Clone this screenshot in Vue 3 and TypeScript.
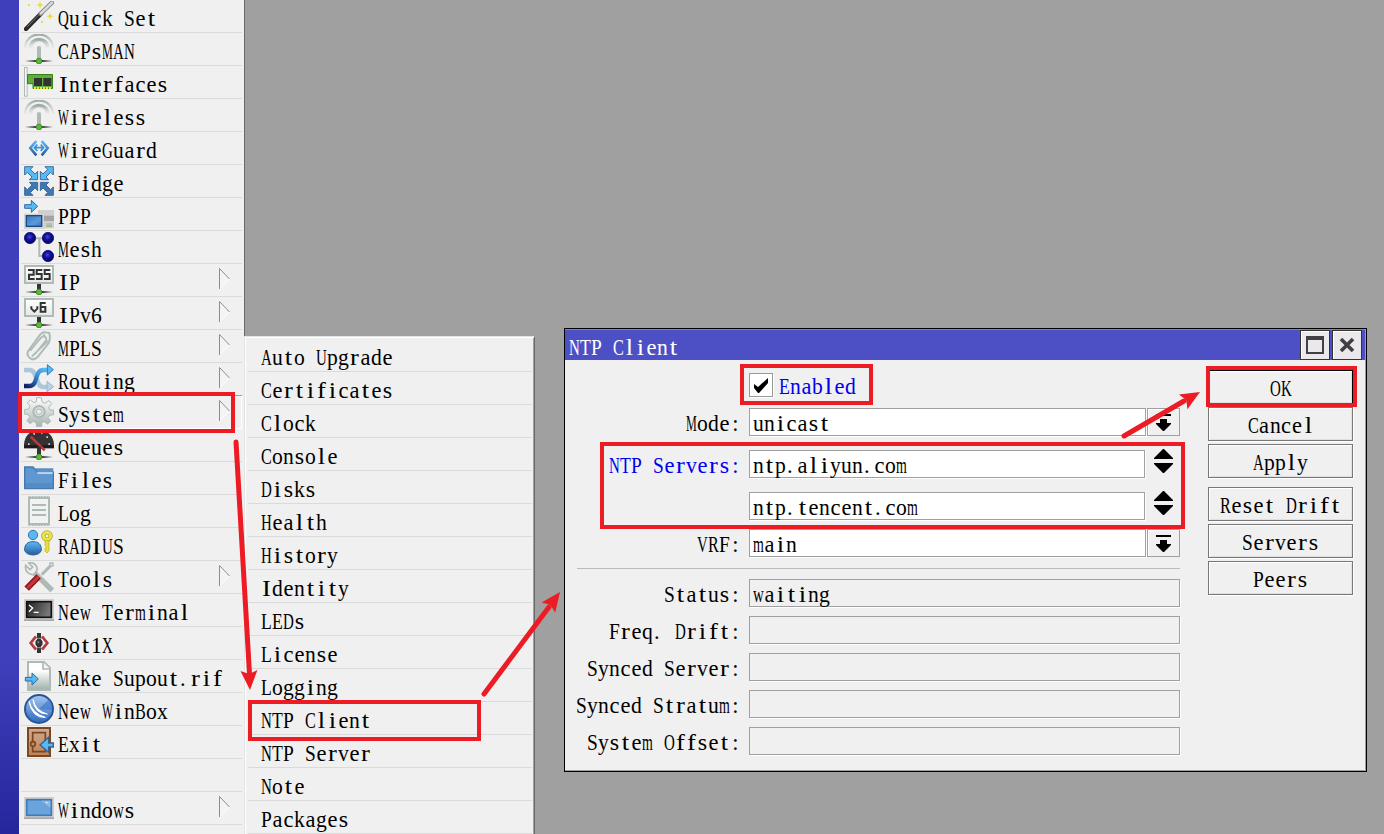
<script setup lang="ts">
import { h, type FunctionalComponent } from 'vue'

interface MenuRow {
  label: string
  icon?: string
  sub?: boolean
  active?: boolean
}

const CELL = 11
const ruler = document.createElement('canvas').getContext('2d')!
ruler.font = '22.5px "Liberation Serif"'

// Sets each glyph into a fixed-pitch cell, condensing wide glyphs and widening narrow ones.
function cellStyle(ch: string) {
  const natural = ruler.measureText(ch).width
  if (natural > 10.4) {
    return { transform: `scaleX(${(10.8 / natural).toFixed(4)})`, transformOrigin: '0 50%' }
  }
  if (ch === '.') return { textIndent: '1px' }
  const indent = ((CELL - natural) / 2).toFixed(2) + 'px'
  if (natural < 9 && ch !== ':') {
    return { textIndent: indent, transform: `scaleX(${Math.min(1.18, 9.4 / natural).toFixed(4)})` }
  }
  return { textIndent: indent }
}

const Cells: FunctionalComponent<{ text: string }> = (props) =>
  h('span', { class: 'cells' }, [...props.text].map((ch) =>
    ch === ' ' ? ' ' : h('span', { class: 'cell', style: cellStyle(ch) }, ch)))
Cells.props = ['text']

const menu: MenuRow[] = [
  { label: 'Quick Set', icon: 'wand' },
  { label: 'CAPsMAN', icon: 'antenna' },
  { label: 'Interfaces', icon: 'card' },
  { label: 'Wireless', icon: 'antenna' },
  { label: 'WireGuard', icon: 'wireguard' },
  { label: 'Bridge', icon: 'bridge' },
  { label: 'PPP', icon: 'ppp' },
  { label: 'Mesh', icon: 'mesh' },
  { label: 'IP', icon: 'ip', sub: true },
  { label: 'IPv6', icon: 'ipv6', sub: true },
  { label: 'MPLS', icon: 'mpls', sub: true },
  { label: 'Routing', icon: 'routing', sub: true },
  { label: 'System', icon: 'gear', sub: true, active: true },
  { label: 'Queues', icon: 'queues' },
  { label: 'Files', icon: 'files' },
  { label: 'Log', icon: 'log' },
  { label: 'RADIUS', icon: 'radius' },
  { label: 'Tools', icon: 'tools', sub: true },
  { label: 'New Terminal', icon: 'terminal' },
  { label: 'Dot1X', icon: 'dot1x' },
  { label: 'Make Supout.rif', icon: 'supout' },
  { label: 'New WinBox', icon: 'winbox' },
  { label: 'Exit', icon: 'exit' },
  { label: '' },
  { label: 'Windows', icon: 'windows', sub: true },
]

const submenu = [
  'Auto Upgrade', 'Certificates', 'Clock', 'Console', 'Disks', 'Health', 'History', 'Identity',
  'LEDs', 'License', 'Logging', 'NTP Client', 'NTP Server', 'Note', 'Packages',
]

const status = [
  { label: 'Status:', value: 'waiting' },
  { label: 'Freq. Drift:', value: '' },
  { label: 'Synced Server:', value: '' },
  { label: 'Synced Stratum:', value: '' },
  { label: 'System Offset:', value: '' },
]

const buttons = [
  { label: 'OK', kind: 'default' },
  { label: 'Cancel', kind: '' },
  { label: 'Apply', kind: '' },
  { label: 'Reset Drift', kind: 'group' },
  { label: 'Servers', kind: '' },
  { label: 'Peers', kind: '' },
]
</script>

<template>
  <div class="desktop">
    <svg class="defs" width="0" height="0" aria-hidden="true">
      <defs>
        <linearGradient id="g-base"><stop offset="0" stop-color="#333" stop-opacity="0" /><stop offset=".4" stop-color="#333" /><stop offset=".6" stop-color="#333" /><stop offset="1" stop-color="#333" stop-opacity="0" /></linearGradient>
        <linearGradient id="g-arc" x2="0" y2="1"><stop offset="0" stop-color="#9eaaa6" /><stop offset="1" stop-color="#c5cdca" stop-opacity=".1" /></linearGradient>
        <linearGradient id="g-blue" x2="0" y2="1"><stop offset="0" stop-color="#5bbcf8" /><stop offset="1" stop-color="#2a5a9c" /></linearGradient>
        <linearGradient id="g-screen" x2="1" y2="1"><stop offset="0" stop-color="#3b78bd" /><stop offset=".6" stop-color="#5e99d6" /><stop offset="1" stop-color="#3b78bd" /></linearGradient>
        <linearGradient id="g-box" x2="0" y2="1"><stop offset="0" stop-color="#fff" /><stop offset="1" stop-color="#e4e8e6" /></linearGradient>
        <linearGradient id="g-gear" x2="0" y2="1"><stop offset=".1" stop-color="#f8f8f8" /><stop offset=".9" stop-color="#aebab6" /></linearGradient>
        <linearGradient id="g-route" x1="0" y1="1" x2="1" y2="0"><stop offset="0" stop-color="#0b1b66" /><stop offset=".6" stop-color="#3f8ed0" /><stop offset="1" stop-color="#58bcf8" /></linearGradient>
        <linearGradient id="g-paper" x2="0" y2="1"><stop offset=".3" stop-color="#fff" /><stop offset="1" stop-color="#9fb0aa" /></linearGradient>
        <linearGradient id="g-door" x2="0" y2="1"><stop offset="0" stop-color="#d0ab90" /><stop offset="1" stop-color="#bd8356" /></linearGradient>
        <radialGradient id="g-navy" cx=".45" cy=".4"><stop offset="0" stop-color="#4848d0" /><stop offset=".5" stop-color="#1313a0" /><stop offset="1" stop-color="#050570" /></radialGradient>
        <linearGradient id="g-ball" x2="0" y2="1"><stop offset="0" stop-color="#a7c7ee" /><stop offset="1" stop-color="#2d68c4" /></linearGradient>
        <linearGradient id="g-term" x2="1" y2=".3"><stop offset="0" stop-color="#1d1d1d" /><stop offset="1" stop-color="#777" /></linearGradient>
      </defs>

      <symbol id="net-base" viewBox="0 0 90 90">
        <rect x="3" y="78" width="84" height="6" fill="url(#g-base)" />
        <circle cx="45" cy="81" r="8.5" fill="#5db83a" stroke="#419423" stroke-width="3" />
      </symbol>
      <symbol id="wand" viewBox="0 0 90 90">
        <path d="M6 84 52 37" stroke="#2a2a2a" stroke-width="13" stroke-linecap="round" />
        <path d="M10 77 52 34" stroke="#777" stroke-width="3" />
        <path d="M50 38 84 5" stroke="#8c8c8c" stroke-width="13" stroke-linecap="round" />
        <path d="M51 37 84 5" stroke="#dcdcdc" stroke-width="7" stroke-linecap="round" />
        <path d="M48 0 51 9 60 12 51 15 48 23 45 15 37 12 45 9zM78 36 81 43 88 46 81 49 78 56 75 49 68 46 75 43zM12 9h6v6h-6zM51 60h6v6h-6z" fill="#e3e13c" />
      </symbol>
      <symbol id="antenna" viewBox="0 0 90 90">
        <path d="M3 44C4-12 86-12 87 44" fill="none" stroke="url(#g-arc)" stroke-width="7" />
        <path d="M19 42C20 8 70 8 71 42" fill="none" stroke="url(#g-arc)" stroke-width="11" />
        <rect x="39" y="37" width="12" height="38" rx="4" fill="#adbab6" />
        <use href="#net-base" width="90" height="90" />
      </symbol>
      <symbol id="card" viewBox="0 0 90 90">
        <rect x="1.5" y="1.5" width="8" height="86" fill="#f4f6f5" stroke="#adbab6" stroke-width="3" />
        <path d="M10.500 22.500H85.500V64.500H27V50H10.500z" fill="#5fae39" stroke="#378217" stroke-width="3" />
        <path d="M30 33H54V57H30zM58 33H82V57H58z" fill="#333" />
        <path d="M30 63H82" stroke="#ece747" stroke-width="6" stroke-dasharray="6 3" />
      </symbol>
      <symbol id="wireguard" viewBox="0 0 90 90">
        <path d="M37 24 19 45 37 67M53 24 71 45 53 67" fill="none" stroke="url(#g-blue)" stroke-width="8" />
        <path d="M32 44H58M40 35 31 44 40 54M50 35 59 44 50 54" fill="none" stroke="#3a8fe0" stroke-width="5" />
      </symbol>
      <symbol id="bridge" viewBox="0 0 90 90">
        <g stroke="#3c6c9e" stroke-width="3" stroke-linejoin="round">
          <path d="M2 2H27L19 10 33 24 41 16V41H16L24 33 10 19 2 27z" fill="#59b9f5" />
          <path d="M88 2H63L71 10 57 24 49 16V41H74L66 33 80 19 88 27z" fill="#59b9f5" />
          <path d="M2 88H27L19 80 33 66 41 74V49H16L24 57 10 71 2 63z" fill="#3f77b0" />
          <path d="M88 88H63L71 80 57 66 49 74V49H74L66 57 80 71 88 63z" fill="#3f77b0" />
        </g>
      </symbol>
      <symbol id="ppp" viewBox="0 0 90 90">
        <path d="M42 33H90V88H42z" fill="#cfcfcf" /><path d="M60 50H90V66H60z" fill="#a5a5a5" />
        <path d="M67 75H84" stroke="#aaa" stroke-width="3" /><path d="M67 81H84" stroke="#5bb83a" stroke-width="3" />
        <path d="M0 44H60V90H0z" fill="#d3d3d3" />
        <rect x="7" y="50" width="46" height="32" fill="url(#g-screen)" stroke="#174b88" stroke-width="4" />
        <path d="M2 17H22V4L41 22 22 40V28H2z" fill="#58b8f2" stroke="#2e6da5" stroke-width="3" />
      </symbol>
      <symbol id="mesh" viewBox="0 0 90 90">
        <path d="M18 19H72M46 19V72H72" fill="none" stroke="#adbab6" stroke-width="6" />
        <g fill="url(#g-navy)" stroke="#05056a" stroke-width="2"><circle cx="18" cy="18" r="17" /><circle cx="72" cy="18" r="17" /><circle cx="72" cy="72" r="17" /></g>
      </symbol>
      <symbol id="netbox" viewBox="0 0 90 90">
        <rect x="39" y="57" width="12" height="18" fill="#333" />
        <rect x="3" y="3" width="84" height="51" fill="url(#g-box)" stroke="#adbab6" stroke-width="6" />
        <use href="#net-base" width="90" height="90" />
      </symbol>
      <symbol id="ip" viewBox="0 0 90 90">
        <use href="#netbox" width="90" height="90" />
        <path d="M12 15H29V29H15V42H32M55 15H38V27H53V42H36M79 15H62V27H77V42H60" fill="none" stroke="#333" stroke-width="6" />
      </symbol>
      <symbol id="ipv6" viewBox="0 0 90 90">
        <use href="#netbox" width="90" height="90" />
        <path d="M22 25V32L31 41 40 32V25M65 15H50V41H64V27H50" fill="none" stroke="#333" stroke-width="6" />
      </symbol>
      <symbol id="mpls" viewBox="0 0 90 90">
        <path d="M12 61 49 10Q56 2 65 4L76 6Q80 25 74 36L40 79Q27 91 16 80 7 71 12 61z" fill="#edf0ef" stroke="#adbab6" stroke-width="6" />
        <path d="M19 59 51 20Q58 13 64 18 70 23 64 31L33 69M23 77 73 29" fill="none" stroke="#adbab6" stroke-width="5" />
        <circle cx="60" cy="14" r="4" fill="#adbab6" />
      </symbol>
      <symbol id="routing" viewBox="0 0 90 90">
        <path d="M0 18H18C39 18 35 69 57 69H72" fill="none" stroke="#adc8db" stroke-width="14" />
        <path d="M69 52 89 68 69 84z" fill="#b9d3e4" stroke="#9bb9ce" stroke-width="3" />
        <path d="M0 66H16C44 66 30 18 58 18H73" fill="none" stroke="url(#g-route)" stroke-width="13" />
        <path d="M70 2 88 17 70 33z" fill="#55baf7" stroke="#2e7ab7" stroke-width="3" />
      </symbol>
      <symbol id="gear" viewBox="0 0 90 90">
        <path fill-rule="evenodd" d="M38 2H52L54 15 63 19 75 11 83 20 74 31 78 39H89V53L76 55 72 62 80 73 71 81 60 74 53 77V89H38L36 77 28 73 18 80 9 71 17 60 13 53 1 51V38L14 36 18 27 10 17 19 9 30 17 37 14z" fill="url(#g-gear)" stroke="#adbab6" stroke-width="3" />
        <circle cx="45" cy="44" r="17" fill="#d8dddb" stroke="#adbab6" stroke-width="6" /><circle cx="45" cy="44" r="8" fill="#f0f0f0" stroke="#adbab6" stroke-width="3" />
      </symbol>
      <symbol id="queues" viewBox="0 0 90 90">
        <path d="M0 55V44C2-15 88-15 90 44V55z" fill="#333" />
        <path d="M0 50H90" stroke="#1b1b1b" stroke-width="9" />
        <path d="M20 20 62 61" stroke="#c5363b" stroke-width="8" />
        <path d="M12 40h5v5h-5zM28 9h5v5h-5zM51 6h5v5h-5zM67 19h5v5h-5zM73 40h5v5h-5z" fill="#ccc" />
        <path d="M39 50H51V76H39z" fill="#333" />
        <use href="#net-base" width="90" height="90" />
      </symbol>
      <symbol id="files" viewBox="0 0 90 90">
        <path d="M2 12H27L40 27H88V77H2z" fill="#5f97d0" stroke="#4179ae" stroke-width="4" />
        <path d="M31 16H88V26H40z" fill="#5990c9" /><path d="M40 30H86" stroke="#eef4fa" stroke-width="4" />
        <path d="M2 60H88V77H2z" fill="#4a82bb" opacity=".5" />
      </symbol>
      <symbol id="log" viewBox="0 0 90 90">
        <rect x="15" y="6" width="60" height="78" fill="#f1f3f2" stroke="#adbab6" stroke-width="6" />
        <path d="M14 3H78M14 87H78" stroke="#adbab6" stroke-width="6" stroke-dasharray="6 3" />
        <path d="M24 27H66M24 42H66M24 57H66" stroke="#adbab6" stroke-width="6" />
      </symbol>
      <symbol id="radius" viewBox="0 0 90 90">
        <circle cx="27" cy="18" r="14" fill="#58b8f4" stroke="#3277ae" stroke-width="3" />
        <path d="M2 64C1 45 12 38 27 38S53 45 52 64Q48 77 27 78 6 77 2 64z" fill="url(#g-blue)" stroke="#2c6096" stroke-width="3" />
        <circle cx="69" cy="21" r="11" fill="none" stroke="#b3ab26" stroke-width="13" /><circle cx="69" cy="21" r="11" fill="none" stroke="#eae546" stroke-width="8" />
        <path d="M64 35H75V65L69 72 63 66V58L67 54 63 49z" fill="#e6df3c" stroke="#b3ab26" stroke-width="2" />
      </symbol>
      <symbol id="tools" viewBox="0 0 90 90">
        <path d="M30 31 79 80" stroke="#adbab6" stroke-width="16" stroke-linecap="square" />
        <path d="M5 10 18 23 26 15 14 3C30-3 45 16 37 28L30 37C18 40 1 30 5 10z" fill="#eef0ef" stroke="#adbab6" stroke-width="5" />
        <path d="M53 38 82 9" stroke="#adbab6" stroke-width="9" /><path d="M78 3H87V12H78z" fill="#f0f0f0" stroke="#adbab6" stroke-width="4" />
        <path d="M8 80 44 43" stroke="#8e171b" stroke-width="19" /><path d="M10 78 44 43" stroke="#c6363a" stroke-width="9" />
      </symbol>
      <symbol id="terminal" viewBox="0 0 90 90">
        <rect y="12" width="90" height="66" fill="#cfcfcf" /><rect y="73" width="90" height="5" fill="#a8a8a8" />
        <rect x="8" y="20" width="74" height="47" fill="url(#g-term)" stroke="#111" stroke-width="5" />
        <path d="M15 30 26 39 15 50M29 52H44" fill="none" stroke="#fff" stroke-width="4" />
      </symbol>
      <symbol id="dot1x" viewBox="0 0 90 90">
        <path d="M36 25 20 45 36 65M54 25 70 45 54 65" fill="none" stroke="#b03a41" stroke-width="8" />
        <path d="M45 15V75" stroke="#333" stroke-width="12" /><path d="M38 31H52M38 59H52" stroke="#999" stroke-width="3" />
        <circle cx="45" cy="45" r="11" fill="#333" /><circle cx="43" cy="43" r="3" fill="#888" />
      </symbol>
      <symbol id="supout" viewBox="0 0 90 90">
        <path d="M12 3H60L78 21V87H12z" fill="url(#g-paper)" stroke="#adbab6" stroke-width="6" />
        <path d="M57 3V24H78" fill="#f4f6f5" stroke="#adbab6" stroke-width="5" />
        <path d="M4 49H24V36L43 54 24 72V60H4z" fill="#58b8f2" stroke="#2e6da5" stroke-width="3" />
      </symbol>
      <symbol id="winbox" viewBox="0 0 90 90">
        <circle cx="45" cy="45" r="42" fill="url(#g-ball)" stroke="#2b5591" stroke-width="6" />
        <path d="M45 45 75 16A40 40 0 0 1 84 48z" fill="#3a74cd" opacity=".6" />
        <path d="M15 22Q24 58 64 70Q25 73 15 22zM27 17Q35 51 70 60Q32 60 27 17z" fill="#fff" stroke="#fff" stroke-width="3" />
      </symbol>
      <symbol id="exit" viewBox="0 0 90 90">
        <rect x="12" y="3" width="66" height="84" fill="url(#g-door)" stroke="#7d4521" stroke-width="6" />
        <path d="M26 42V17H64V74H26V60" fill="none" stroke="#7d4521" stroke-width="5" />
        <circle cx="27" cy="51" r="7" fill="#c48a60" stroke="#7d4521" stroke-width="5" />
        <path d="M88 48H74V31L48 54 74 76V60H88z" fill="#58b8f2" stroke="#35638e" stroke-width="4" />
      </symbol>
      <symbol id="windows" viewBox="0 0 90 90">
        <rect y="12" width="90" height="66" fill="#cfcfcf" /><rect y="73" width="90" height="5" fill="#a8a8a8" />
        <rect x="8" y="20" width="74" height="47" fill="#6ba3dc" stroke="#3d79b4" stroke-width="5" />
        <path d="M52 23H79V44z" fill="#8bbbe8" /><path d="M66 27h4v4h-4z" fill="#fff" />
      </symbol>
      <symbol id="drop" viewBox="0 0 15 17">
        <path d="M0 0H15V2H0zM4 5H11V9H15V10L8 17H7L0 10V9H4z" />
      </symbol>
    </svg>

    <div class="rail"></div>
    <nav class="menu">
      <div v-for="(row, i) in menu" :key="i" class="row" :class="{ active: row.active }">
        <svg v-if="row.icon" class="icon"><use :href="'#' + row.icon" /></svg>
        <Cells v-if="row.label" class="row-label" :text="row.label" />
        <svg v-if="row.sub" class="chevron" viewBox="0 0 12 22">
          <path d="M.5 0V21L10.500 11z" fill="#f4f4f4" />
          <path d="M.5 21 10.500 11" stroke="#fff" fill="none" />
          <path d="M.5 21V.5L10.500 11" stroke="#8c8c8c" fill="none" />
        </svg>
      </div>
    </nav>

    <nav class="submenu">
      <div v-for="item in submenu" :key="item" class="row sub-row"><Cells :text="item" /></div>
    </nav>

    <section class="window">
      <header class="title">
        <Cells class="title-text" text="NTP Client" />
        <span class="tbtn"><svg width="18" height="18"><path d="M1 0V17H17V0" fill="none" stroke="#404040" stroke-width="2" /><path d="M0 2H18" stroke="#404040" stroke-width="4" /></svg></span>
        <span class="tbtn"><svg width="16" height="16"><path d="M2 2 14 14M14 2 2 14" stroke="#404040" stroke-width="3.600" /></svg></span>
      </header>
      <div class="body">
        <div class="form">
          <div class="line check-line">
            <span class="label"></span>
            <span class="check"><svg width="15" height="16"><path d="M0 6 4 9 14 0V5L5 15H4L0 10z" /></svg></span>
            <Cells class="blue enabled" text="Enabled" />
          </div>
          <div class="line gap-mode">
            <span class="label"><Cells text="Mode:" /></span>
            <span class="field"><Cells text="unicast" /></span>
            <span class="drop"><svg width="15" height="17"><use href="#drop" /></svg></span>
          </div>
          <div class="line gap-server">
            <span class="label blue"><Cells text="NTP Servers:" /></span>
            <span class="field short"><Cells text="ntp.aliyun.com" /></span>
            <span class="spin"><svg width="20" height="24"><path d="M9 0H10L19 9V10H0V9zM0 14H19V15L10 24H9L0 15z" /></svg></span>
          </div>
          <div class="line gap-server">
            <span class="label"></span>
            <span class="field short"><Cells text="ntp.tencent.com" /></span>
            <span class="spin"><svg width="20" height="24"><path d="M9 0H10L19 9V10H0V9zM0 14H19V15L10 24H9L0 15z" /></svg></span>
          </div>
          <div class="line gap-line">
            <span class="label"><Cells text="VRF:" /></span>
            <span class="field"><Cells text="main" /></span>
            <span class="drop"><svg width="15" height="17"><use href="#drop" /></svg></span>
          </div>
          <div class="rule"></div>
          <div v-for="s in status" :key="s.label" class="line gap-line">
            <span class="label"><Cells :text="s.label" /></span>
            <span class="field readonly"><Cells v-if="s.value" :text="s.value" /></span>
          </div>
        </div>
        <div class="actions">
          <button v-for="b in buttons" :key="b.label" class="btn" :class="b.kind"><Cells :text="b.label" /></button>
        </div>
      </div>
    </section>

    <svg class="marks" width="1384" height="834" viewBox="0 0 1384 834">
      <g fill="none" stroke="#ed1c24" stroke-width="4">
        <rect x="20" y="394" width="213" height="37" />
        <rect x="250" y="702" width="229" height="37" />
        <rect x="742" y="366" width="129" height="37" />
        <rect x="602" y="444" width="581" height="83" />
        <rect x="1208" y="368" width="147" height="37" />
      </g>
      <g stroke="#ed1c24" stroke-width="5" stroke-linecap="round">
        <path d="M236 442 249.500 674" /><path d="M484 694 549 607" /><path d="M1124 436 1184 401" />
      </g>
      <g fill="#ed1c24">
        <path transform="translate(250 690) rotate(87)" d="M0 0-19.500-8.500-16 0-19.500 8.500z" />
        <path transform="translate(560 592) rotate(-53.300)" d="M0 0-19.500-8.500-16 0-19.500 8.500z" />
        <path transform="translate(1200 392) rotate(-30.300)" d="M0 0-19.500-8.500-16 0-19.500 8.500z" />
      </g>
    </svg>
  </div>
</template>

<style>
body { margin: 0; overflow: hidden; }
.cells {
  display: inline-block;
  font-family: "Liberation Serif", serif;
  font-size: 22.5px;
  word-spacing: 5.375px;
  white-space: pre;
}
.cell { display: inline-block; width: 11px; text-align: left; }
</style>

<style scoped>
.desktop { position: relative; display: flex; width: 1384px; height: 834px; overflow: hidden; background: #a0a0a0; color: #000; }
.defs { position: absolute; }
.rail { width: 19px; height: 834px; background: linear-gradient(#3f3fbb 0, #3f3fbb 660px, #26269c 834px); }
.menu { box-sizing: border-box; width: 226px; height: 834px; padding: 0 2px; background: #f0f0f0; border-right: 1px solid #696969; }
.row { box-sizing: border-box; position: relative; display: flex; height: 33px; padding: 1px 0 0 3px; border-bottom: 1px solid #dadada; line-height: 36px; }
.row.active { box-shadow: 0 -1px #a0a0a0; border-bottom-color: #fff; border-right: 1px solid #fff; }
.icon { width: 30px; height: 30px; margin-right: 4px; flex: none; }
.chevron { width: 12px; height: 22px; position: absolute; left: 198px; top: 4px; }
.submenu { position: absolute; left: 244px; top: 336px; box-sizing: border-box; width: 291px; height: 500px; padding: 1px 2px 0 2px; background: #f0f0f0; border: 1px solid #e3e3e3; border-right-color: #696969; box-shadow: inset 1px 1px #fff, inset -1px 0 #a0a0a0; }
.submenu .row { margin: 0 0 0 1px; padding-left: 13px; }
.submenu .row:first-child { margin-top: 1px; }
.window { position: absolute; left: 564px; top: 328px; box-sizing: border-box; width: 803px; height: 444px; border: 1px solid #000; background: #f0f0f0; box-shadow: inset -1px -1px #a0a0a0; }
.title { display: flex; box-sizing: border-box; height: 31px; margin-right: 1px; padding: 0 3px 0 4px; border-top: 1px solid #8084b8; background: #4d50c4; color: #fff; gap: 2px; }
.title-text { flex: 1; line-height: 36px; }
.tbtn { box-sizing: border-box; display: flex; align-items: center; justify-content: center; width: 30px; height: 30px; background: #eae8ea; border: 1px solid #333; box-shadow: inset 1px 1px #fff; }
.body { display: flex; height: 410px; }
.form { width: 615px; padding-top: 13px; }
.line { display: flex; height: 28px; line-height: 31px; }
.check-line { height: 24px; }
.label { width: 176px; margin-right: 8px; text-align: right; white-space: nowrap; }
.blue { color: #0000f0; }
.check { box-sizing: border-box; width: 24px; height: 24px; border: 1px solid #999; background: #fff; box-shadow: 1px 1px #fff; padding: 4px; line-height: 0; }
.enabled { margin-left: 6px; line-height: 27px; }
.gap-mode { margin-top: 11px; }
.gap-server { margin-top: 14px; }
.gap-line { margin-top: 9px; }
.rule { height: 1px; margin: 11px 0 10px 12px; background: #bbb; }
.rule + .line { margin-top: 0; }
.field { box-sizing: border-box; width: 397px; height: 28px; padding-left: 3px; border: 1px solid #a0a0a0; background: #fff; box-shadow: 1px 1px #fff; line-height: 29px; }
.short { width: 396px; }
.readonly { width: 431px; background: #f0f0f0; }
.drop { box-sizing: border-box; width: 33px; height: 28px; margin-left: 1px; padding: 5px 0 0 8px; border: 1px solid #a0a0a0; background: #f0f0f0; box-shadow: inset 1px 1px #fff; line-height: 0; }
.spin { margin-left: 9px; margin-top: -1px; line-height: 0; }
.actions { display: flex; flex-direction: column; gap: 3px; margin-left: 28px; padding-top: 10px; }
.btn { box-sizing: border-box; width: 145px; height: 34px; padding: 3px 0 0; border: 1px solid #777; border-radius: 0; background: #f0f0f0; box-shadow: inset 1px 1px #fff, inset -1px -1px #e0e0e0, 1px 1px #fff; line-height: 29px; color: #000; }
.btn.default { border-color: #000; }
.btn.group { margin-top: 6px; }
.marks { position: absolute; left: 0; top: 0; pointer-events: none; }
</style>
